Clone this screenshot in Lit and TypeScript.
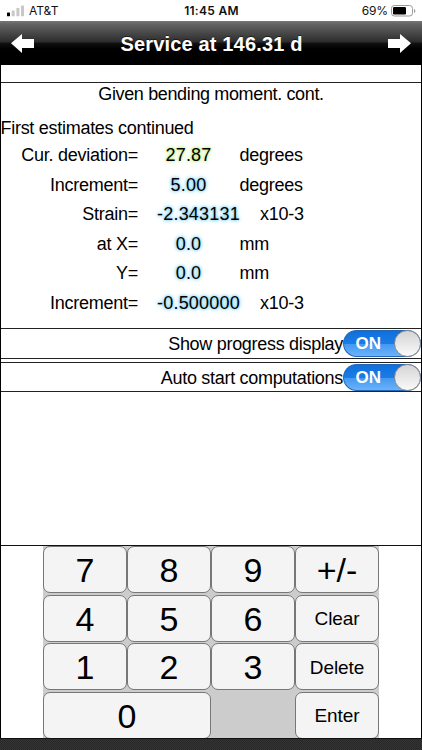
import { LitElement, html, css } from "lit";
import { customElement, property } from "lit/decorators.js";

interface Field {
  label: string;
  value: string;
  unit: string;
  tone: "" | "green";
  wide: boolean;
}

const FIELDS: Field[] = [
  { label: "Cur. deviation=", value: "27.87", unit: "degrees", tone: "green", wide: false },
  { label: "Increment=", value: "5.00", unit: "degrees", tone: "", wide: false },
  { label: "Strain=", value: "-2.343131", unit: "x10-3", tone: "", wide: true },
  { label: "at X=", value: "0.0", unit: "mm", tone: "", wide: false },
  { label: "Y=", value: "0.0", unit: "mm", tone: "", wide: false },
  { label: "Increment=", value: "-0.500000", unit: "x10-3", tone: "", wide: true },
];

const KEYS = ["7", "8", "9", "+/-", "4", "5", "6", "Clear", "1", "2", "3", "Delete", "0", "", "Enter"];

@customElement("status-bar")
export class StatusBar extends LitElement {
  static styles = css`
    :host {
      display: grid;
      grid-template-columns: 1fr auto 1fr;
      align-items: center;
      height: 21px;
      box-sizing: border-box;
      padding: 1px 6px 0 7px;
      background: #fff;
      color: #111;
      font: 12px/20px Inter, "Liberation Sans", sans-serif;
    }
    .left, .right { display: flex; align-items: center; }
    .left { gap: 5px; }
    .right { justify-content: flex-end; gap: 3px; letter-spacing: -0.1px; }
    .time { font-weight: 600; font-size: 12px; letter-spacing: 0.3px; }
    svg { display: block; }
  `;
  render() {
    return html`
      <div class="left">
        <svg width="17" height="12" viewBox="0 0 17 12">
          <rect x="0" y="7.5" width="3" height="3.8" rx=".6" fill="#000" />
          <rect x="4.7" y="5.5" width="3" height="5.8" rx=".6" fill="#c8c8c8" />
          <rect x="9.4" y="3" width="3" height="8.3" rx=".6" fill="#c8c8c8" />
          <rect x="14" y="0.5" width="3" height="10.8" rx=".6" fill="#c8c8c8" />
        </svg>
        <span>AT&amp;T</span>
      </div>
      <div class="time">11:45 AM</div>
      <div class="right">
        <span>69%</span>
        <svg width="25" height="12" viewBox="0 0 25 12">
          <rect x=".5" y=".5" width="21" height="10.5" rx="2.8" fill="#fff" stroke="#9a9a9a" />
          <rect x="2" y="2" width="13" height="7.5" rx="1.3" fill="#000" />
          <path d="M23 4v4q1.4-.6 1.4-2T23 4z" fill="#9a9a9a" />
        </svg>
      </div>
    `;
  }
}

@customElement("nav-header")
export class NavHeader extends LitElement {
  static styles = css`
    :host {
      display: flex;
      align-items: center;
      justify-content: space-between;
      height: 44px;
      box-sizing: border-box;
      padding: 0 10px 0 11px;
      background: linear-gradient(#777 0, #646464 3px, #2c2c2c 21px, #111 22px, #000 28px, #000 100%);
      color: #fff;
      font: bold 20px/44px "Liberation Sans", Arial, sans-serif;
    }
    .title { letter-spacing: 0.17px; padding-top: 2px; line-height: 42px; text-shadow: 0 -1px 0 rgba(0, 0, 0, 0.5); }
    svg { display: block; margin-top: 1px; }
  `;
  render() {
    return html`
      <svg width="24" height="19" viewBox="0 0 24 19">
        <path d="M0 9.3L11 0v5h12v9H11v5z" fill="#fff" />
      </svg>
      <div class="title">Service at 146.31 d</div>
      <svg width="24" height="19" viewBox="0 0 24 19">
        <path d="M23 9.3L12 0v5H0v9h12v5z" fill="#fff" />
      </svg>
    `;
  }
}

@customElement("switch-row")
export class SwitchRow extends LitElement {
  @property() label = "";
  static styles = css`
    :host {
      display: flex;
      justify-content: flex-end;
      align-items: center;
      height: 100%;
    }
    .label { line-height: 28px; padding-top: 1px; letter-spacing: -0.3px; }
    .switch {
      display: flex;
      align-items: center;
      justify-content: space-between;
      box-sizing: border-box;
      width: 78px;
      height: 27px;
      padding-left: 11.5px;
      border: 1px solid #2467b5;
      border-right: 0;
      border-radius: 14px;
      background: linear-gradient(#0f6fdc 0, #1c7ce6 50%, #4298f1 52%, #6bb2fa 100%);
      color: #fff;
      font: bold 17px/25px "Liberation Sans", Arial, sans-serif;
    }
    .knob {
      width: 27px;
      height: 27px;
      flex: none;
      box-sizing: border-box;
      border: 1px solid #8c8c8c;
      border-radius: 50%;
      background: linear-gradient(#d4d4d4, #fafafa);
    }
  `;
  render() {
    return html`
      <span class="label">${this.label}</span>
      <div class="switch"><span>ON</span><span class="knob"></span></div>
    `;
  }
}

@customElement("key-pad")
export class KeyPad extends LitElement {
  static styles = css`
    :host {
      display: grid;
      grid-template-columns: repeat(4, 84px);
      grid-template-rows: repeat(4, 1fr);
      width: 336px;
      height: 193px;
      background: #ccc;
      row-gap: 1.5px;
    }
    .key {
      display: flex;
      align-items: center;
      justify-content: center;
      box-sizing: border-box;
      border: 1px solid #777;
      border-radius: 7px;
      background: #f4f4f4;
      color: #000;
      font: 34px/1 "Liberation Sans", Arial, sans-serif;
      padding-top: 1px;
    }
    .word { font-size: 19px; letter-spacing: -0.1px; }
    .zero { grid-column: span 2; }
  `;
  render() {
    return KEYS.map((k) =>
      k === ""
        ? html`<span></span>`
        : html`<div class="key ${k.length > 3 ? "word" : ""} ${k === "0" ? "zero" : ""}">${k}</div>`
    );
  }
}

@customElement("app-root")
export class AppRoot extends LitElement {
  static styles = css`
    :host {
      display: flex;
      flex-direction: column;
      height: 750px;
      overflow: hidden;
      background: #fff;
      color: #000;
      font: 18px/20px "Liberation Sans", Arial, sans-serif;
    }
    .page {
      display: flex;
      flex-direction: column;
      height: 674px;
      box-sizing: border-box;
      border-left: 1px solid #000;
      border-right: 1px solid #000;
    }
    .strip { height: 17px; border-bottom: 1px solid #222; }
    .form { height: 246px; box-sizing: border-box; border-bottom: 1px solid #222; padding-top: 1px; }
    .heading { text-align: center; line-height: 20px; margin-bottom: 14px; letter-spacing: -0.36px; }
    .section { line-height: 20px; margin: 0 0 3px -0.5px; letter-spacing: -0.28px; }
    .row {
      display: grid;
      grid-template-columns: 137px 101px 1fr;
      height: 29.5px;
      line-height: 29.5px;
    }
    .row.wide { grid-template-columns: 137px 121px 1fr; }
    .label { text-align: right; letter-spacing: -0.26px; }
    .unit { letter-spacing: -0.26px; padding-left: 0.5px; }
    .value {
      text-align: center;
      letter-spacing: 0.22px;
      text-shadow: 0 0 3px #5cc0ee, 0 0 5px #7fd2f5;
    }
    .row.wide .unit { padding-left: 1px; }
    .green { text-shadow: 0 0 3px #a8e45a, 0 0 5px #c2f07c; }
    .option { height: 29px; border-bottom: 1px solid #222; }
    .gap { height: 3px; border-bottom: 1px solid #222; }
    .option.second { height: 28px; }
    .blank { height: 153px; border-bottom: 1px solid #111; }
    key-pad { margin-left: 42px; }
    .foot {
      flex: 1;
      border-top: 1px solid #111;
      margin-top: -1px;
      background: repeating-conic-gradient(#282828 0 25%, #343434 0 50%) 0 0 / 2px 2px;
    }
  `;
  render() {
    return html`
      <status-bar></status-bar>
      <nav-header></nav-header>
      <div class="page">
        <div class="strip"></div>
        <div class="form">
          <div class="heading">Given bending moment. cont.</div>
          <div class="section">First estimates continued</div>
          ${FIELDS.map(
            (f) => html`
              <div class="row ${f.wide ? "wide" : ""}">
                <span class="label">${f.label}</span>
                <span class="value ${f.tone}">${f.value}</span>
                <span class="unit">${f.unit}</span>
              </div>
            `
          )}
        </div>
        <div class="option"><switch-row label="Show progress display"></switch-row></div>
        <div class="gap"></div>
        <div class="option second"><switch-row label="Auto start computations"></switch-row></div>
        <div class="blank"></div>
        <key-pad></key-pad>
      </div>
      <div class="foot"></div>
    `;
  }
}
